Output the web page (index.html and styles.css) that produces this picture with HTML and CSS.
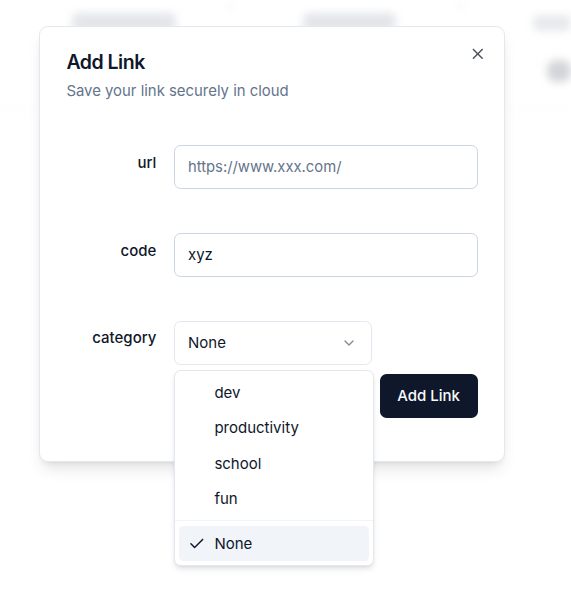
FILE: index.html
```html
<!DOCTYPE html>
<html lang="en">
<head>
<meta charset="utf-8">
<title>Add Link</title>
<link rel="stylesheet" href="styles.css">
</head>
<body>
<div class="backdrop">
  <div class="bg-row bg-row-head">
    <span class="blob blob-a"></span>
    <span class="dot dot-a"></span>
    <span class="blob blob-b"></span>
    <span class="dot dot-b"></span>
    <span class="blob blob-c"></span>
  </div>
  <div class="bg-row bg-row-body">
    <span class="pill"></span>
  </div>
</div>

<div class="dialog" role="dialog">
  <button class="close" aria-label="Close">
    <svg viewBox="0 0 24 24" width="17.6" height="17.6" fill="none" stroke="currentColor" stroke-width="2" stroke-linecap="round" stroke-linejoin="round"><path d="M18 6 6 18"/><path d="m6 6 12 12"/></svg>
  </button>
  <div class="header">
    <h2 class="title">Add Link</h2>
    <p class="desc">Save your link securely in cloud</p>
  </div>
  <form class="form">
    <div class="row">
      <label class="label">url</label>
      <div class="input placeholder">https://www.xxx.com/</div>
    </div>
    <div class="row">
      <label class="label">code</label>
      <div class="input">xyz</div>
    </div>
    <div class="row row-select">
      <label class="label">category</label>
      <div class="select-wrap">
        <div class="trigger">
          <span>None</span>
          <svg class="chev" viewBox="0 0 24 24" width="16" height="16" fill="none" stroke="currentColor" stroke-width="2" stroke-linecap="round" stroke-linejoin="round"><path d="m6 9 6 6 6-6"/></svg>
        </div>
        <div class="menu">
          <div class="item">dev</div>
          <div class="item">productivity</div>
          <div class="item">school</div>
          <div class="item">fun</div>
          <div class="sep"></div>
          <div class="item selected">
            <svg class="check" viewBox="0 0 24 24" width="17.6" height="17.6" fill="none" stroke="currentColor" stroke-width="2" stroke-linecap="round" stroke-linejoin="round"><path d="M20 6 9 17l-5-5"/></svg>
            None
          </div>
        </div>
      </div>
    </div>
    <div class="footer">
      <button type="button" class="btn">Add Link</button>
    </div>
  </form>
</div>
</body>
</html>
```
FILE: styles.css
```css
* { box-sizing: border-box; }
html, body {
  margin: 0;
  padding: 0;
  background: #ffffff;
  font-family: Inter, "Noto Sans", "Liberation Sans", sans-serif;
  color: #0f172a;
}
body { width: 571px; height: 592px; overflow: hidden; }

/* blurred page behind the dialog */
.backdrop {
  height: 110px;
  border-bottom: 1px solid #f1f3f5;
  filter: blur(4px);
}
.bg-row { display: flex; }
.bg-row-head { height: 44px; padding-top: 13px; align-items: flex-start; }
.blob { display: block; height: 18px; border-radius: 6px; background: #e3e5e9; }
.blob-a { width: 110px; margin-left: 72px; }
.dot { display: block; width: 6px; height: 6px; background: #eef0f2; border-radius: 3px; margin-top: -10px; }
.dot-a { margin-left: 52px; }
.blob-b { width: 98px; margin-left: 70px; }
.dot-b { margin-left: 62px; }
.blob-c { width: 40px; height: 16px; margin-left: 70px; margin-top: 2px; background: #e8e9ec; }
.bg-row-body { height: 66px; align-items: flex-start; padding-top: 16px; }
.pill { display: block; width: 40px; height: 22px; margin-left: 547px; border-radius: 9px; background: #d3d4d8; }

/* dialog */
.dialog {
  position: absolute;
  left: 39px;
  top: 26px;
  width: 466px;
  height: 436px;
  background: #fff;
  border: 1px solid #e2e8f0;
  border-radius: 8.8px;
  box-shadow: 0 10px 15px -3px rgba(0,0,0,0.1), 0 4px 6px -4px rgba(0,0,0,0.1);
  padding: 26.4px 26.4px 26.4px;
}
.close {
  position: absolute;
  top: 17.6px;
  right: 17.6px;
  width: 17.6px;
  height: 17.6px;
  padding: 0;
  border: 0;
  background: transparent;
  color: #0f172a;
  opacity: 0.75;
  display: flex;
}
.header { display: flex; flex-direction: column; gap: 6.6px; }
.title {
  margin: 0;
  font-size: 19.5px;
  line-height: 19.8px;
  font-weight: 600;
  letter-spacing: -0.025em;
  color: #0f172a;
}
.desc {
  margin: 0;
  font-size: 14.9px;
  line-height: 22px;
  color: #64748b;
}
.form {
  display: flex;
  flex-direction: column;
  padding-top: 43px;
}
.row {
  display: grid;
  grid-template-columns: 90px 1fr;
  column-gap: 17.6px;
  align-items: center;
  margin-bottom: 44px;
}
.row-select { margin-bottom: 0; align-items: start; }
.label {
  text-align: right;
  font-size: 15px;
  font-weight: 500;
  line-height: 1;
  padding-bottom: 9px;
  color: #0f172a;
}
.row-select .label { padding-top: 9px; padding-bottom: 0; }
.input {
  height: 44px;
  border: 1px solid #cbd5e1;
  border-radius: 6.6px;
  padding: 0 13px;
  display: flex;
  align-items: center;
  font-size: 15px;
  color: #0f172a;
}
.placeholder { color: #64748b; font-size: 14.8px; }

.select-wrap { position: relative; }
.trigger {
  width: 198px;
  height: 44px;
  border: 1px solid #e2e8f0;
  border-radius: 6.6px;
  padding: 0 14px 0 13px;
  display: flex;
  align-items: center;
  justify-content: space-between;
  font-size: 15px;
  color: #0f172a;
}
.chev { color: #0f172a; opacity: 0.5; }

.menu {
  position: absolute;
  top: 49px;
  left: 0;
  width: 200px;
  z-index: 10;
  background: #fff;
  border: 1px solid #e2e8f0;
  border-radius: 6.6px;
  padding: 4.4px;
  box-shadow: 0 4px 6px -1px rgba(0,0,0,0.1), 0 2px 4px -2px rgba(0,0,0,0.1);
}
.item {
  position: relative;
  height: 35.2px;
  padding-left: 35px;
  display: flex;
  align-items: center;
  font-size: 15px;
  color: #0f172a;
  border-radius: 4.4px;
}
.item.selected { background: #f1f5f9; }
.check { position: absolute; left: 8.4px; top: 8.8px; }
.sep { height: 1px; background: #f1f5f9; margin: 4.4px -4.4px; }

.footer {
  display: flex;
  justify-content: flex-end;
  margin-top: 9px;
}
.btn {
  height: 44px;
  width: 98px;
  padding: 0;
  border: 0;
  border-radius: 6.6px;
  background: #0f172a;
  color: #f8fafc;
  font-family: inherit;
  font-size: 15px;
  font-weight: 500;
}
```
